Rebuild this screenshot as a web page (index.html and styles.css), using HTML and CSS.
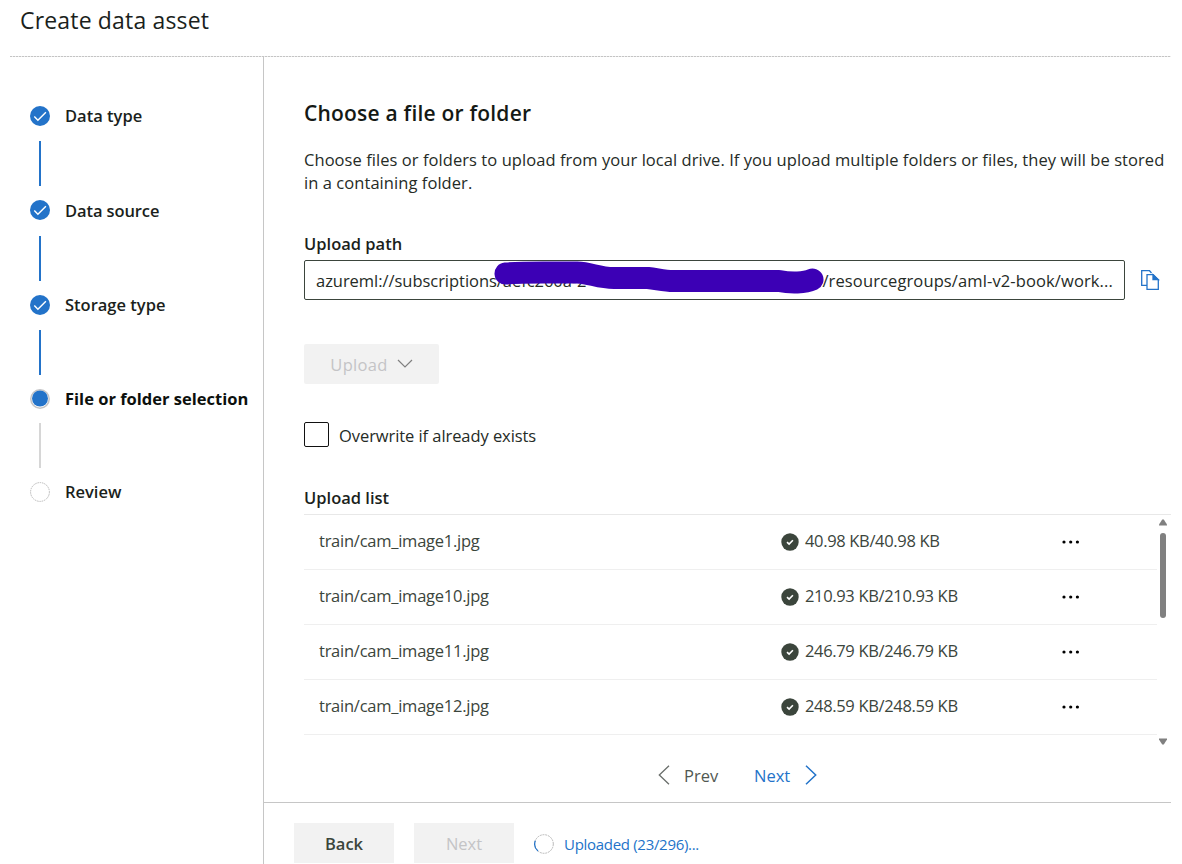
FILE: index.html
```
<!DOCTYPE html>
<html lang="en">
<head>
<meta charset="utf-8">
<title>Create data asset</title>
<link rel="stylesheet" href="styles.css">
</head>
<body>
<svg width="0" height="0" class="defs">
  <symbol id="step-check" viewBox="0 0 20 20"><circle cx="10" cy="10" r="10" fill="#2373c9"/><path d="M4.3 10.500l3.600 3.800 8-8" fill="none" stroke="#fff" stroke-width="1.400"/></symbol>
  <symbol id="done" viewBox="0 0 18 18"><circle cx="9" cy="9" r="8.700" fill="#3b453c"/><path d="M6 9.100l2.100 2 3.800-3.900" fill="none" stroke="#fff" stroke-width="1.600"/></symbol>
  <symbol id="dots" viewBox="0 0 18 4"><circle cx="2" cy="2" r="1.600"/><circle cx="8.700" cy="2" r="1.600"/><circle cx="15.400" cy="2" r="1.600"/></symbol>
</svg>
<div class="page">
  <header class="header"><h1 class="title">Create data asset</h1></header>
  <div class="body">
    <nav class="steps">
      <div class="step"><svg class="mark"><use href="#step-check"/></svg><span class="label">Data type</span></div>
      <div class="line"></div>
      <div class="step"><svg class="mark"><use href="#step-check"/></svg><span class="label source">Data source</span></div>
      <div class="line second"></div>
      <div class="step"><svg class="mark"><use href="#step-check"/></svg><span class="label">Storage type</span></div>
      <div class="line"></div>
      <div class="step"><svg class="mark" viewBox="0 0 20 20"><circle cx="10" cy="10" r="9.200" fill="#fff" stroke="#c4c4c6" stroke-width="1.500"/><circle cx="10" cy="9.500" r="8" fill="#2373c9"/></svg><span class="label current">File or folder selection</span></div>
      <div class="line pending"></div>
      <div class="step"><svg class="mark" viewBox="0 0 20 20"><circle cx="10" cy="10" r="9.400" fill="#fff" stroke="#b8b8b8" stroke-dasharray="1.500 .8"/></svg><span class="label">Review</span></div>
    </nav>
    <div class="content">
      <main class="main">
        <h2 class="heading">Choose a file or folder</h2>
        <p class="intro"><span class="intro-first">Choose files or folders to upload from your local drive. If you upload multiple folders or files, they will be stored</span><br>in a containing folder.</p>
        <h3 class="field-label">Upload path</h3>
        <div class="path-row">
          <div class="path">
            <span class="url-start">azureml://subscriptions/aefc260a-2</span><span class="url-end">/resourcegroups/aml-v2-book/work...</span>
            <svg class="redaction" viewBox="0 0 332 36" width="332" height="36"><path d="M12.500 12.500Q24 11.500 50 11.500H84C98 12 105 17 121 17H155C164 18 172 20 180 20H286C298 22.500 312 22 319.500 18.500" fill="none" stroke="#3c00b5" stroke-width="22" stroke-linecap="round" stroke-linejoin="round"/></svg>
          </div>
          <svg class="copy" viewBox="0 0 20 22" width="20" height="22" fill="none" stroke="#2373c9" stroke-width="1.300"><path d="M7 16.300H1.700V1.700H9.500L11.500 4"/><path d="M7 5.700H13.200L18.300 11V20.300H7Z"/><path d="M13 5.700V10.500H18.300Z" fill="#2373c9"/></svg>
        </div>
        <button class="upload"><span>Upload</span><svg width="16" height="10" viewBox="0 0 16 10"><path d="M1 1l7 7 7-7" fill="none" stroke="#808080" stroke-width="1.200"/></svg></button>
        <label class="overwrite"><span class="box"></span><span class="overwrite-text">Overwrite if already exists</span></label>
        <h3 class="list-label">Upload list</h3>
        <div class="list">
          <div class="rows">
            <div class="row"><span class="name">train/cam_image1.jpg</span><span class="size"><svg class="done"><use href="#done"/></svg><span class="amount">40.98 KB/40.98 KB</span></span><svg class="dots"><use href="#dots"/></svg></div>
            <div class="row"><span class="name">train/cam_image10.jpg</span><span class="size"><svg class="done"><use href="#done"/></svg><span class="amount">210.93 KB/210.93 KB</span></span><svg class="dots"><use href="#dots"/></svg></div>
            <div class="row"><span class="name">train/cam_image11.jpg</span><span class="size"><svg class="done"><use href="#done"/></svg><span class="amount">246.79 KB/246.79 KB</span></span><svg class="dots"><use href="#dots"/></svg></div>
            <div class="row"><span class="name">train/cam_image12.jpg</span><span class="size"><svg class="done"><use href="#done"/></svg><span class="amount">248.59 KB/248.59 KB</span></span><svg class="dots"><use href="#dots"/></svg></div>
          </div>
          <div class="scrollbar">
            <svg width="8" height="7" viewBox="0 0 8 7"><path d="M3.200 .5h1.600L8 5.500V6.500H0V5.500Z" fill="#808080"/></svg>
            <div class="thumb"></div>
            <svg width="8" height="7" viewBox="0 0 8 7"><path d="M3.200 6.500h1.600L8 1.500V.5H0V1.500Z" fill="#808080"/></svg>
          </div>
        </div>
        <div class="pager">
          <svg width="12" height="20" viewBox="0 0 12 20"><path d="M11 .8L1.300 10l9.700 9.200" fill="none" stroke="#6a6e6b" stroke-width="1.300"/></svg>
          <span class="prev">Prev</span><span class="next">Next</span>
          <svg width="12" height="20" viewBox="0 0 12 20"><path d="M1 .8l9.700 9.200L1 19.200" fill="none" stroke="#2373c9" stroke-width="1.500"/></svg>
        </div>
      </main>
      <footer class="footer">
        <button class="btn back">Back</button>
        <button class="btn disabled">Next</button>
        <svg class="spinner" width="20" height="20" viewBox="0 0 20 20" fill="none"><circle cx="10" cy="10" r="9.300" stroke="#b8b8b8" stroke-dasharray="2 .8"/><path d="M1.300 6.700A9.300 9.300 0 0 0 4 17" stroke="#2373c9" stroke-width="1.200"/></svg>
        <span class="progress">Uploaded (23/296)...</span>
      </footer>
    </div>
  </div>
</div>
</body>
</html>
```
FILE: styles.css
```
* { box-sizing: border-box; }
body { margin: 0; background: #fff; color: #252b26; font: 16.5px/23px "Open Sans", "Noto Sans", sans-serif; }
h1, h2, h3, p { margin: 0; }
button { font: inherit; border: 0; padding: 0; }
svg { display: block; flex: none; }
span { white-space: nowrap; }
.defs { position: absolute; }
.page { height: 864px; overflow: hidden; display: flex; flex-direction: column; padding: 0 11px 0 10px; }
.header { height: 57px; flex: none; padding: 4px 10px; background: repeating-linear-gradient(90deg, #c4c4c4 0 2px, #ececec 2px 3px) bottom / 100% 1px no-repeat; }
.title { font-size: 23px; line-height: 32px; font-weight: 400; color: #1b1f1c; letter-spacing: .17px; }
.body { display: flex; flex: 1; min-height: 0; }
.steps { width: 254px; flex: none; border-right: 1px solid #c6c6c6; padding: 49px 0 0 20px; }
.step { height: 20px; display: flex; align-items: center; gap: 15px; }
.mark { width: 20px; height: 20px; }
.label { font-weight: 600; color: #1b1f1c; padding-bottom: 2px; }
.source { padding-bottom: 0; letter-spacing: -.1px; }
.current { color: #0c100d; font-weight: 700; }
.line { width: 2px; height: 45px; margin: 15px 0 14px 9px; background: #2373c9; }
.line.second { margin-top: 16px; }
.line.pending { margin-top: 14px; background: #d6d6d6; }
.content { flex: 1; min-width: 0; display: flex; flex-direction: column; }
.main { height: 745px; padding: 42px 0 0 40px; }
.heading { font-size: 21px; line-height: 28px; font-weight: 600; color: #141915; letter-spacing: .21px; }
.intro { margin-top: 21px; letter-spacing: .06px; }
.field-label, .list-label { font-size: 16.5px; line-height: 23px; font-weight: 600; color: #1b1f1c; }
.field-label { margin-top: 38px; }
.path-row { display: flex; align-items: center; gap: 15px; margin-top: 5px; }
.path { position: relative; width: 821px; height: 40px; border: 1px solid #3b453c; border-radius: 2px; display: flex; justify-content: space-between; align-items: center; padding: 0 11px; }
.url-start { letter-spacing: -.04px; }
.url-end { letter-spacing: .12px; }
.redaction { position: absolute; left: 188px; top: 0; }
.upload { width: 135px; height: 40px; margin-top: 44px; border-radius: 2px; background: #f2f2f2; color: #c4c4c6; display: flex; align-items: center; justify-content: center; gap: 9px; letter-spacing: .3px; }
.overwrite { display: flex; align-items: center; gap: 10px; margin-top: 38px; height: 25px; }
.overwrite-text { padding-top: 2px; letter-spacing: -.07px; }
.box { width: 25px; height: 25px; border: 1px solid #111; border-radius: 2px; }
.list-label { margin-top: 39px; }
.list { display: flex; margin-top: 5px; height: 234px; width: 867px; border-top: 1px solid #e8e8e8; }
.rows { width: 853px; }
.row { height: 55px; border-bottom: 1px solid #efefef; display: flex; align-items: center; padding-left: 15px; color: #3b453c; }
.name { width: 462px; padding-bottom: 3px; letter-spacing: -.25px; }
.size { width: 281px; display: flex; align-items: center; gap: 6px; }
.amount { padding-bottom: 3px; letter-spacing: -.34px; }
.done { width: 18px; height: 18px; margin-bottom: 1px; }
.dots { width: 18px; height: 4px; }
.scrollbar { display: flex; flex-direction: column; align-items: center; width: 12px; padding: 4px 0 3px; }
.thumb { width: 6px; height: 85px; border-radius: 3px; background: #808080; margin: 7px 0 auto; }
.pager { display: flex; align-items: center; height: 23px; margin: 15px 0 0 354px; }
.prev, .next { padding-top: 2px; }
.prev { margin-left: 14px; width: 70px; color: #515852; }
.next { width: 51px; color: #2373c9; }
.footer { height: 62px; border-top: 1px solid #c6c6c6; padding: 20px 0 0 30px; display: flex; align-items: flex-start; }
.btn { width: 100px; height: 40px; flex: none; margin-right: 20px; background: #f2f2f2; }
.back { font-weight: 600; color: #3b453c; }
.disabled { color: #c4c4c6; }
.spinner { margin: 11px 10px 0 0; }
.progress { margin-top: 10px; font-size: 15px; color: #2373c9; letter-spacing: -.3px; }
```
